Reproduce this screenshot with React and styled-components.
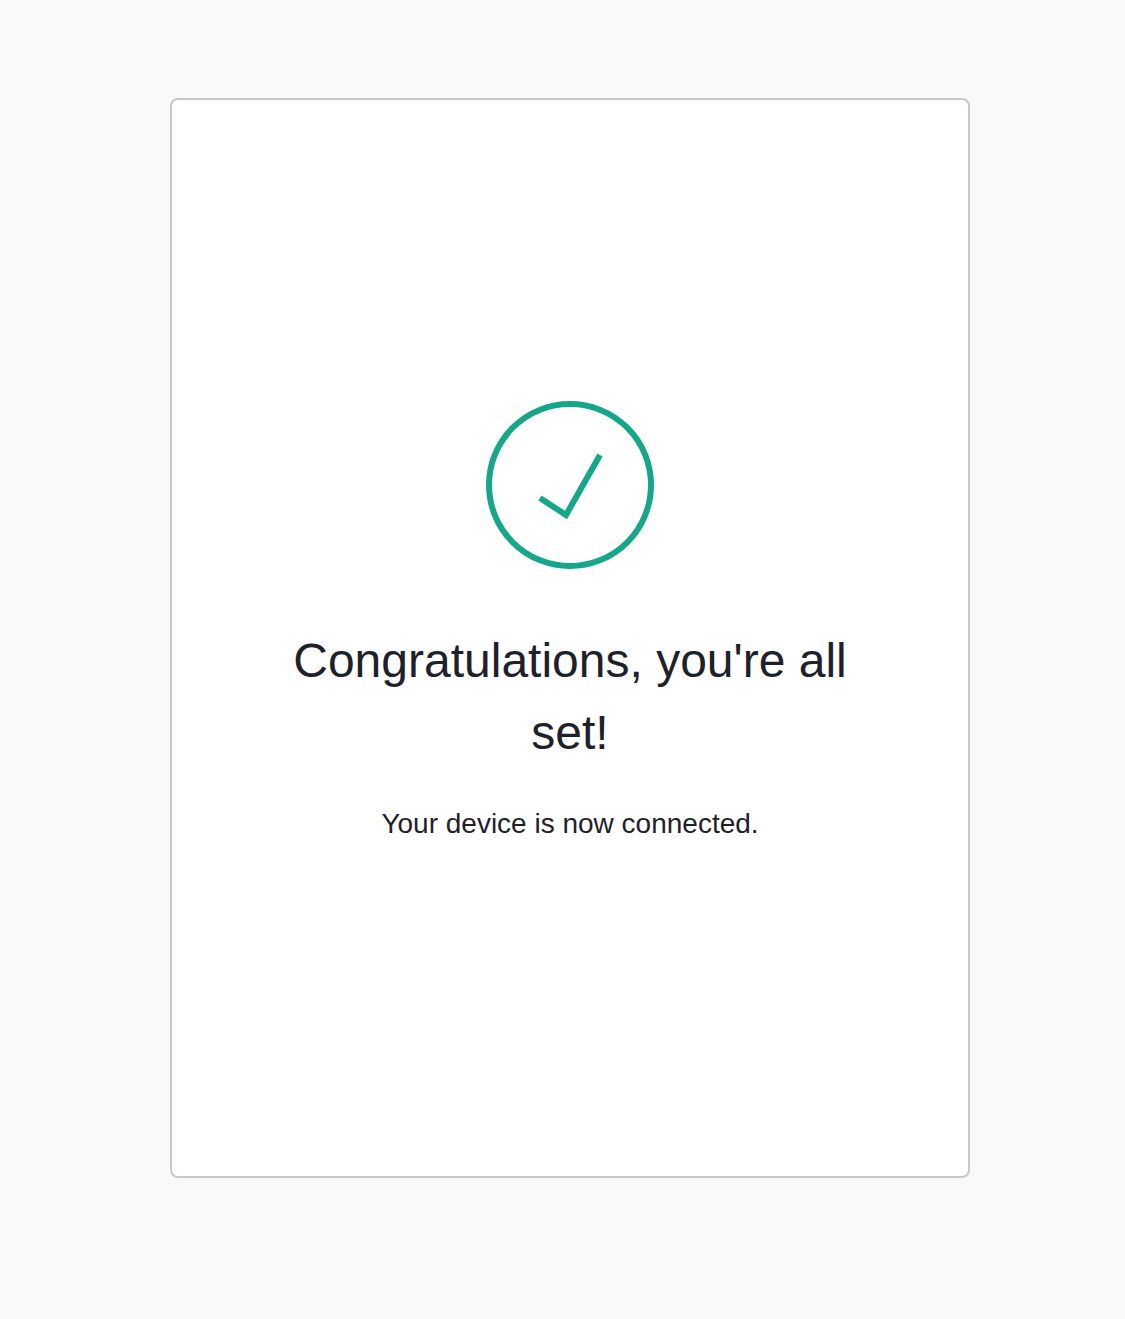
import React from "react";
import styled, { createGlobalStyle } from "styled-components";

const GlobalStyle = createGlobalStyle`
  * { box-sizing: border-box; }
  body {
    margin: 0;
    background: #f9f9f9;
    color: #1f212a;
    font-family: "Liberation Sans", Arial, sans-serif;
  }
`;

const Page = styled.main`
  min-height: 1319px;
  padding: 98px 0 0 170px;
`;

const Card = styled.section`
  width: 800px;
  height: 1080px;
  padding: 301px 96px 0;
  display: flex;
  flex-direction: column;
  align-items: center;
  background: #fff;
  border: 2px solid #c8c7cc;
  border-radius: 8px;
  text-align: center;
`;

const SuccessIcon = styled.svg`
  width: 168px;
  height: 168px;
  flex: none;
  fill: none;
  stroke: #16a78a;
  stroke-width: 6;
`;

const Title = styled.h1`
  margin: 56px 0 0;
  font-size: 48px;
  line-height: 72px;
  font-weight: 400;
`;

const Message = styled.p`
  margin: 34px 0 0;
  font-size: 28px;
  line-height: 42px;
`;

export default function App() {
  return (
    <Page>
      <GlobalStyle />
      <Card>
        <SuccessIcon viewBox="0 0 168 168" aria-hidden="true">
          <circle cx="84" cy="84" r="81" />
          <path d="M54 97L80 114L114 54" />
        </SuccessIcon>
        <Title>Congratulations, you're all set!</Title>
        <Message>Your device is now connected.</Message>
      </Card>
    </Page>
  );
}
